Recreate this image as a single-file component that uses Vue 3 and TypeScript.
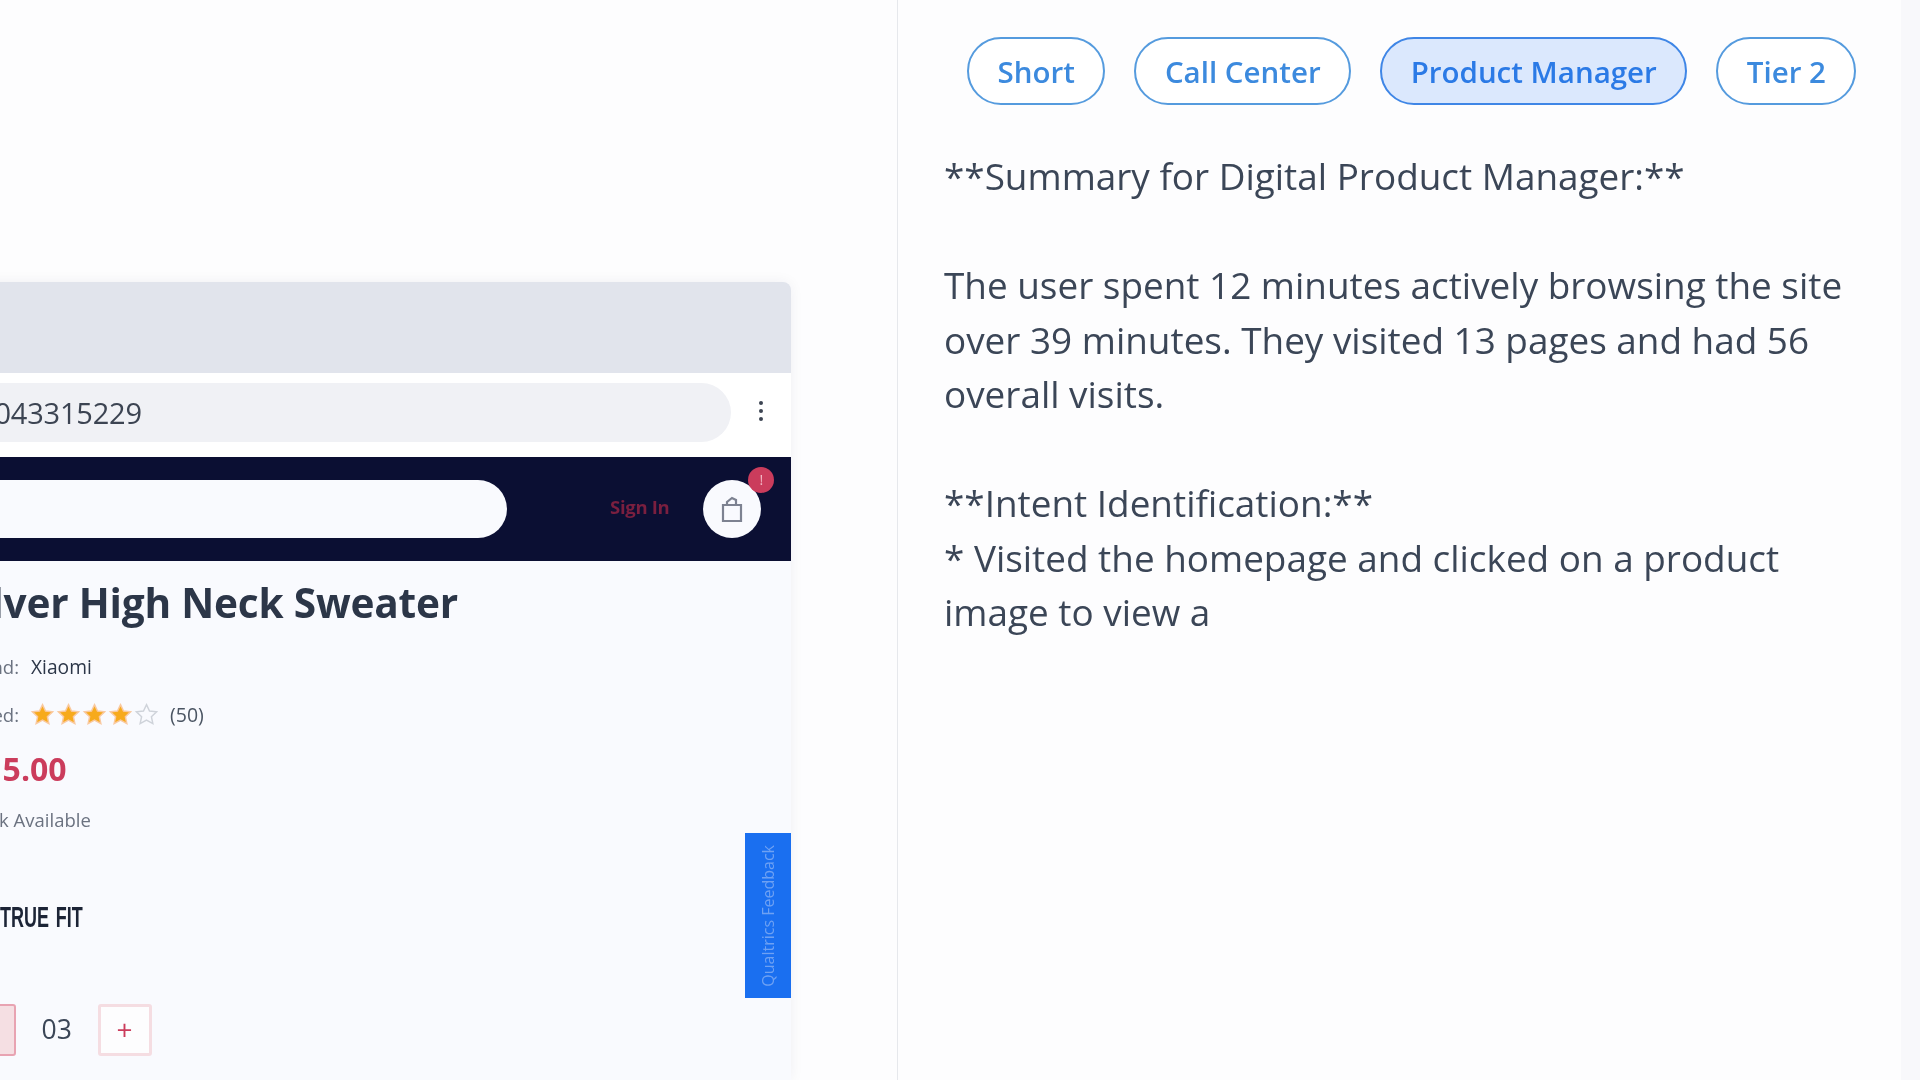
<script setup lang="ts">
const tags = [
  { label: 'Short', active: false },
  { label: 'Call Center', active: false },
  { label: 'Product Manager', active: true },
  { label: 'Tier 2', active: false },
];

const stars = [true, true, true, true, false];
const starPath = 'M12 2.500l2.900 6.200 6.800.8-5 4.600 1.400 6.700L12 17.400l-6.100 3.400 1.400-6.700-5-4.600 6.800-.8z';
</script>

<template>
  <div class="page">
    <section class="preview">
      <div class="browser">
        <div class="browser-top"></div>
        <div class="address-row">
          <div class="address">1043315229</div>
          <div class="kebab"><i></i><i></i><i></i></div>
        </div>
        <div class="site-nav">
          <div class="search"></div>
          <span class="sign-in">Sign In</span>
          <div class="cart">
            <svg width="24" height="27" viewBox="0 0 24 27" fill="none" stroke="#7d8291" stroke-width="2.200">
              <path d="M3 9h18v16H3z" />
              <path d="M7 9V6l5-4 4 2v5" />
            </svg>
            <span class="cart-badge">!</span>
          </div>
        </div>
        <div class="product">
          <h1 class="title">Silver High Neck Sweater</h1>
          <div class="meta brand">
            <span class="meta-label">Brand:</span>
            <span class="meta-value">Xiaomi</span>
          </div>
          <div class="meta rated">
            <span class="meta-label">Rated:</span>
            <span class="stars">
              <svg v-for="(on, i) in stars" :key="i" width="25" height="25" viewBox="0 0 24 24">
                <path :d="starPath" :fill="on ? '#f7aa1c' : 'none'" :stroke="on ? '#f9c9a0' : '#cfd3da'" stroke-width="1.400" />
              </svg>
            </span>
            <span class="count">(50)</span>
          </div>
          <div class="price">$15.00</div>
          <div class="stock">In Stock Available</div>
          <div class="true-fit">TRUE FIT</div>
          <div class="qty">
            <button class="qty-btn minus">−</button>
            <span class="qty-value">03</span>
            <button class="qty-btn plus">+</button>
          </div>
        </div>
        <div class="feedback"><span>Qualtrics Feedback</span></div>
      </div>
    </section>

    <section class="summary">
      <div class="tags">
        <span v-for="tag in tags" :key="tag.label" class="tag" :class="{ active: tag.active }">{{ tag.label }}</span>
      </div>
      <div class="text">
        <p>**Summary for Digital Product Manager:**</p>
        <p>The user spent 12 minutes actively browsing the site over 39 minutes. They visited 13 pages and had 56 overall visits.</p>
        <p>**Intent Identification:**<br />* Visited the homepage and clicked on a product image to view a</p>
      </div>
    </section>
    <div class="gutter"></div>
  </div>
</template>

<style scoped>
.page {
  display: flex;
  width: 1920px;
  height: 1080px;
  overflow: hidden;
  background: #fdfdfe;
  font-family: "Open Sans", sans-serif;
  color: #3b4657;
}

.preview {
  width: 897px;
  height: 1080px;
  flex: none;
  overflow: hidden;
  border-right: 1px solid #e6e8ec;
  padding-top: 282px;
  box-sizing: content-box;
}

.browser {
  position: relative;
  width: 1000px;
  height: 798px;
  margin-left: -209px;
  background: #f9fafe;
  border-radius: 0 8px 0 0;
  box-shadow: 0 0 14px rgba(30, 40, 70, 0.06);
  filter: blur(0.7px);
  overflow: hidden;
}

.browser-top {
  height: 91px;
  background: #e1e4ec;
}

.address-row {
  display: flex;
  align-items: center;
  height: 84px;
  padding-bottom: 5px;
  box-sizing: border-box;
  background: #fff;
}

.address {
  width: 940px;
  height: 59px;
  line-height: 59px;
  border-radius: 0 30px 30px 0;
  background: #f0f1f5;
  color: #3c4452;
  font-size: 29px;
  letter-spacing: -0.2px;
  padding-left: 187px;
  box-sizing: border-box;
  white-space: nowrap;
}

.kebab {
  display: flex;
  flex-direction: column;
  gap: 4px;
  margin: -4px 0 0 28px;
}

.kebab i {
  width: 4px;
  height: 4px;
  border-radius: 50%;
  background: #3c4452;
}

.site-nav {
  display: flex;
  align-items: center;
  height: 104px;
  background: #0b0f33;
}

.search {
  width: 716px;
  height: 58px;
  border-radius: 0 29px 29px 0;
  background: #f9fafe;
}

.sign-in {
  margin: -6px 0 0 103px;
  color: #7a1f3f;
  font-size: 18.500px;
  font-weight: 700;
  letter-spacing: -0.3px;
}

.cart {
  position: relative;
  display: flex;
  align-items: center;
  justify-content: center;
  width: 58px;
  height: 58px;
  margin-left: 34px;
  border-radius: 50%;
  background: #f9fafe;
}

.cart-badge {
  position: absolute;
  top: -13px;
  right: -13px;
  width: 26px;
  height: 26px;
  line-height: 26px;
  border-radius: 50%;
  background: #cb3c5c;
  color: #f3b9c6;
  font-size: 14px;
  text-align: center;
}

.product {
  display: flex;
  flex-direction: column;
  padding-left: 160px;
}

.title {
  margin: 17px 0 0 6px;
  height: 50px;
  line-height: 50px;
  font-size: 40.600px;
  font-weight: 700;
  letter-spacing: -0.2px;
  color: #2c3648;
  white-space: nowrap;
}

.meta {
  display: flex;
  align-items: center;
  height: 24px;
  font-size: 18.500px;
}

.brand {
  margin-top: 26px;
}

.rated {
  margin-top: 24px;
}

.meta-label {
  width: 80px;
  padding-right: 12px;
  box-sizing: border-box;
  text-align: right;
  color: #6b7280;
}

.meta-value {
  font-size: 19.200px;
  color: #2c3648;
}

.stars {
  display: flex;
  gap: 1px;
  margin-left: -1px;
}

.count {
  margin-left: 11px;
  font-size: 19.500px;
  color: #4b5563;
}

.price {
  margin: 23px 0 0 15px;
  height: 40px;
  line-height: 40px;
  font-size: 32px;
  font-weight: 700;
  color: #cb3c5c;
}

.stock {
  margin: 19px 0 0 -10px;
  height: 24px;
  line-height: 24px;
  font-size: 18.500px;
  color: #6b7280;
}

.true-fit {
  margin: 65px 0 0 49px;
  height: 40px;
  line-height: 40px;
  width: 120px;
  font-family: "Liberation Sans", sans-serif;
  font-size: 30px;
  font-weight: 700;
  word-spacing: 3px;
  color: #1c2436;
  white-space: nowrap;
  transform: scaleX(0.6);
  transform-origin: left center;
}

.qty {
  display: flex;
  align-items: center;
  margin: 67px 0 0 0;
}

.qty-btn {
  width: 54px;
  height: 52px;
  padding: 0 0 3px;
  border-radius: 3px;
  border: 3px solid #f5dde2;
  background: #fdfdfe;
  color: #cb3c5c;
  font-family: "Open Sans", sans-serif;
  font-size: 28px;
  line-height: 1;
}

.minus {
  margin-left: 11px;
  background: #f5dfe3;
  border: 2px solid #e8a3b2;
}

.qty-value {
  width: 81.500px;
  margin-top: -2px;
  text-align: center;
  font-size: 26.500px;
  color: #3b4657;
}

.feedback {
  position: absolute;
  top: 551px;
  right: 0;
  display: flex;
  align-items: center;
  justify-content: center;
  width: 46px;
  height: 165px;
  background: #1a6ff0;
}

.feedback span {
  writing-mode: vertical-rl;
  transform: rotate(180deg);
  color: #6ea1f3;
  font-size: 16px;
  white-space: nowrap;
}

.summary {
  width: 1003px;
  flex: none;
  padding: 37px 0 0 46px;
  box-sizing: border-box;
  filter: blur(0.5px);
}

.gutter {
  flex: 1;
  background: #f8f8fb;
}

.tags {
  display: flex;
  gap: 29px;
  margin-left: 23px;
}

.tag {
  display: flex;
  align-items: center;
  height: 68px;
  padding: 0 28.500px;
  box-sizing: border-box;
  border: 2px solid #559bde;
  border-radius: 34px;
  background: #fff;
  color: #3c8ade;
  font-size: 29.500px;
  font-weight: 600;
}

.tag.active {
  background: #dbe8fd;
  border-color: #3f86e6;
  color: #2b7ae6;
}

.text {
  width: 930px;
  margin-top: 44px;
  font-size: 36.900px;
  line-height: 54.500px;
  color: #3b4657;
}

.text p {
  margin: 0 0 54.500px;
}
</style>
